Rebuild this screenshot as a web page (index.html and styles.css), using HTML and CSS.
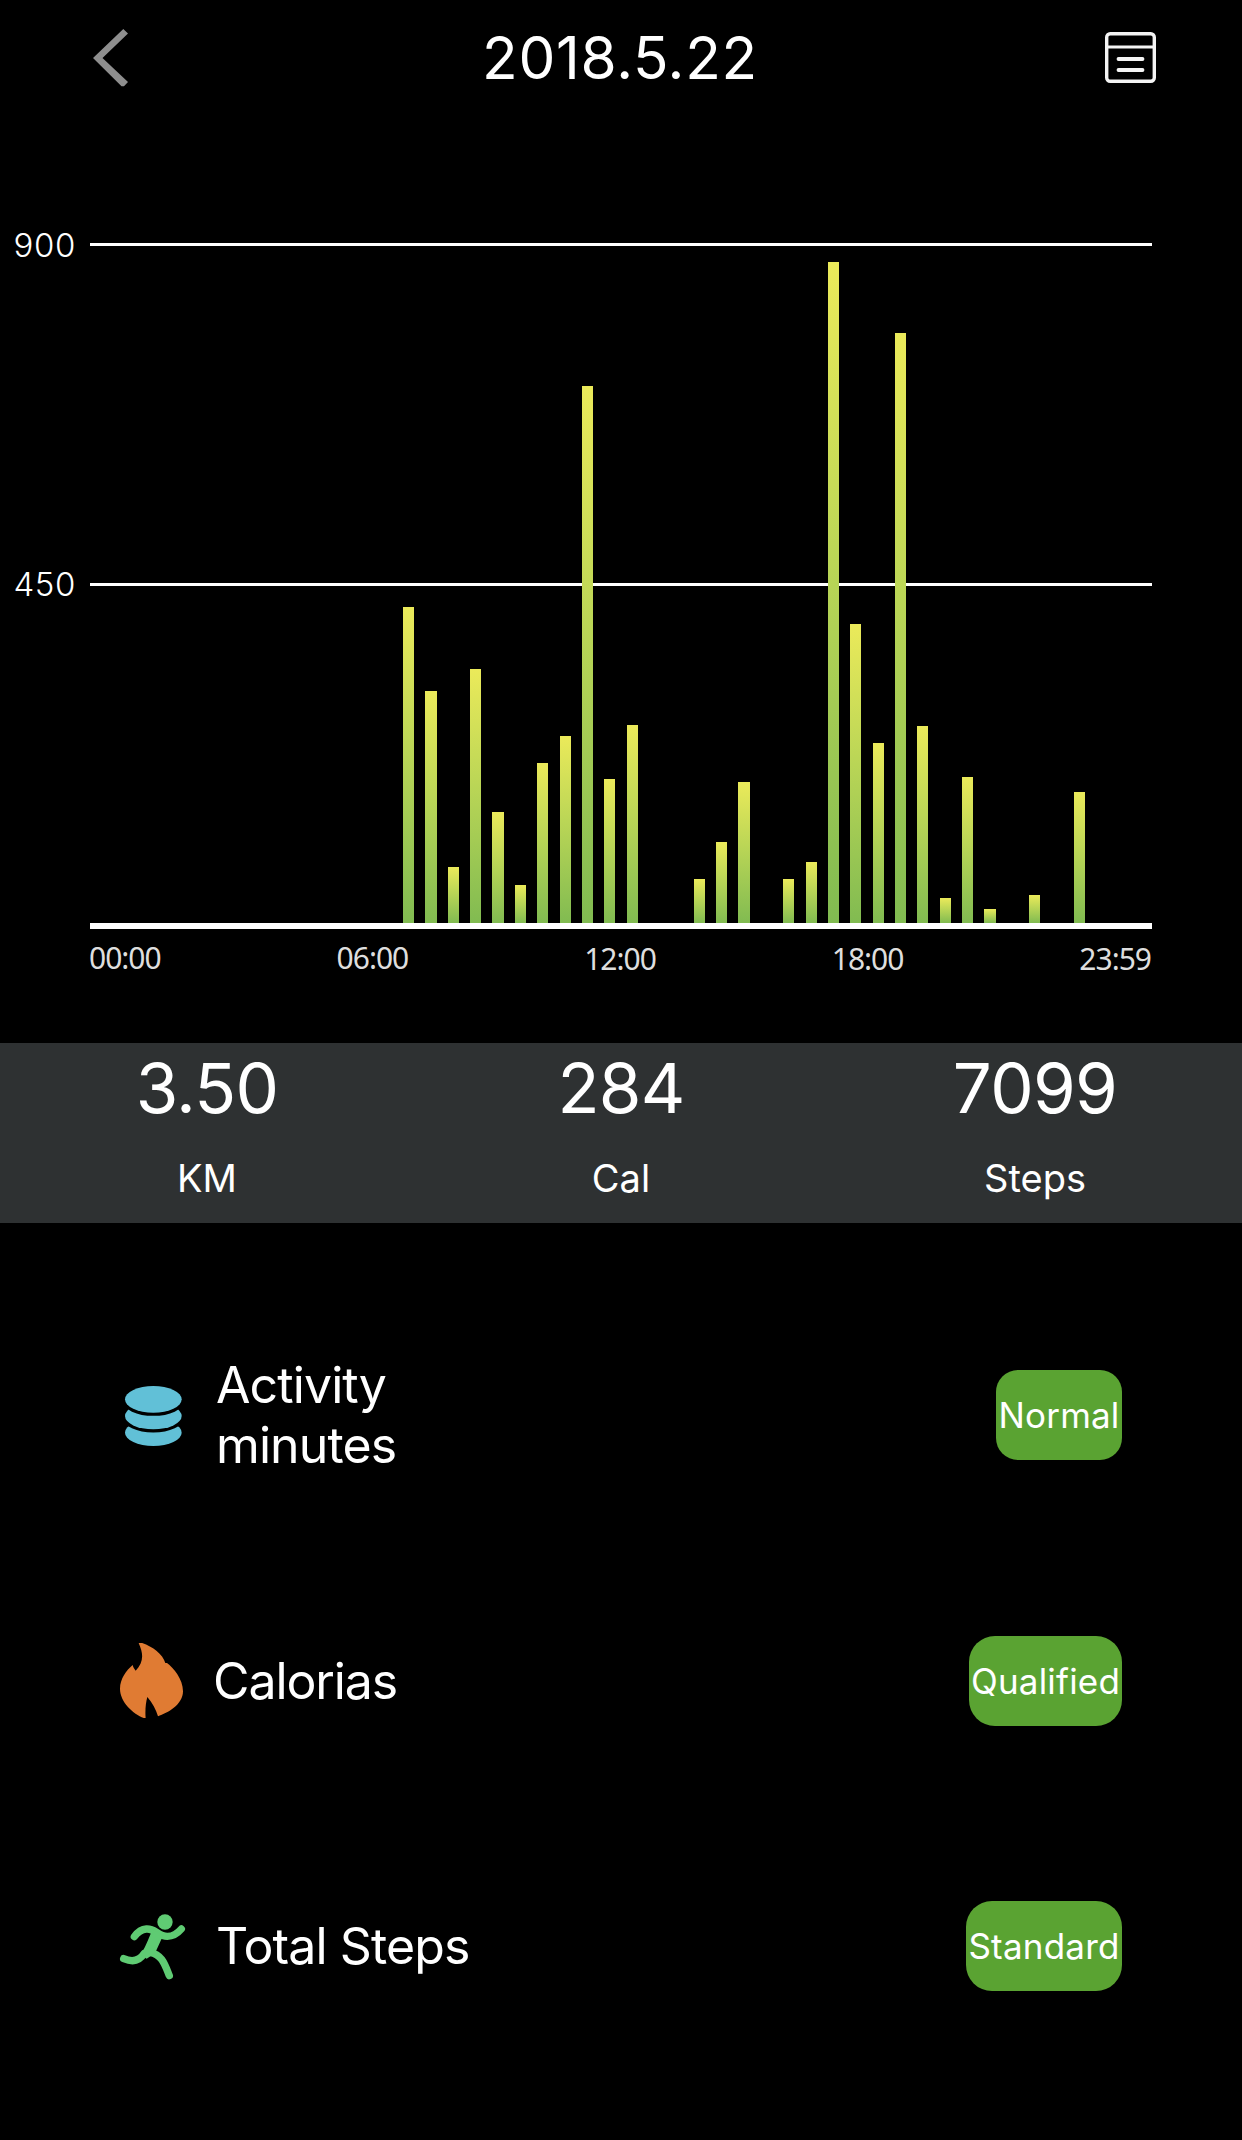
FILE: index.html
```html
<!DOCTYPE html>
<html lang="en">
<head>
  <meta charset="UTF-8" />
  <title>Daily Activity</title>
  <meta name="viewport" content="width=device-width, initial-scale=1.0" />
  <link rel="stylesheet" href="styles.css">
</head>
<body>
  <header class="header">
    <svg class="back" viewBox="0 0 35 58">
      <path d="M30.3 0 35 4.6 9.5 29 35 53 31 57.3H28.5L0 29Z" fill="#8e8e8e" />
    </svg>
    <h1>2018.5.22</h1>
    <svg class="list-icon" viewBox="0 0 51 51" fill="none" stroke="#f4f4f4" stroke-width="3.4">
      <rect x="1.7" y="1.7" width="47.6" height="47.6" rx="3.5" />
      <path d="M2 15h47" stroke-width="3" />
      <path d="M13.5 27h24M13.5 38h24" stroke-width="3.8" stroke-linecap="round" />
    </svg>
  </header>

  <section class="chart">
    <div class="y-axis">
      <span>900</span>
      <span>450</span>
    </div>
    <div class="plot">
      <div class="bars" id="bars"></div>
    </div>
    <div class="x-axis">
      <span>00:00</span>
      <span>06:00</span>
      <span class="low">12:00</span>
      <span class="low">18:00</span>
      <span class="low">23:59</span>
    </div>
  </section>

  <section class="stats">
    <div class="stat"><strong>3.50</strong><span>KM</span></div>
    <div class="stat"><strong>284</strong><span>Cal</span></div>
    <div class="stat"><strong>7099</strong><span>Steps</span></div>
  </section>

  <ul class="goals">
    <li>
      <svg class="icon" viewBox="45 83 225 225">
        <g fill="#61c0d7" stroke="#000" stroke-width="19" paint-order="stroke">
          <ellipse cx="160" cy="247" rx="85" ry="40" />
          <ellipse cx="160" cy="197" rx="85" ry="40" />
          <ellipse cx="160" cy="147" rx="85" ry="40" />
        </g>
      </svg>
      <span class="label minutes">Activity minutes</span>
      <span class="badge normal">Normal</span>
    </li>
    <li>
      <svg class="icon" viewBox="45 70 225 225">
        <path fill="#e07b33" d="M114 66C150 76 187 99 196 130L201 130C220 144 249 178 249 215C249 255 203 280 174 290C168 270 157 249 142 232C137 250 135 272 137 297C105 287 60 250 60 207C60 178 79 152 98 136C99 142 103 148 107 153C131 128 132 103 114 66Z" />
      </svg>
      <span class="label calories">Calorias</span>
      <span class="badge qualified">Qualified</span>
    </li>
    <li>
      <svg class="icon" viewBox="45 56 225 225">
        <g fill="none" stroke="#5fcb73" stroke-width="22" stroke-linecap="round" stroke-linejoin="round">
          <circle cx="195" cy="95" r="23" fill="#5fcb73" stroke="none" />
          <path d="M103 139C114 124 124 117 139 116C166 114 175 138 202 138C220 138 233 129 244 116" />
          <path d="M71 205C100 217 119 211 132 190" />
          <path d="M150 186C186 193 194 221 208 256" />
          <path d="M152 116 191 132 165 189 140 205 121 193Q132 180 152 130Z" fill="#5fcb73" stroke="none" />
        </g>
      </svg>
      <span class="label">Total Steps</span>
      <span class="badge standard">Standard</span>
    </li>
  </ul>

  <script>
    // one entry per half hour
    const steps = [
      0, 0, 0, 0, 0, 0, 0, 0, 0, 0, 0, 0,
      0, 0, 418, 307, 74, 336, 147, 50, 212, 247, 711, 191,
      262, 0, 0, 58, 107, 187, 0, 58, 81, 875, 396, 238,
      781, 261, 33, 193, 18, 0, 37, 0, 173, 0, 0, 0
    ];
    const max = 900;

    document.getElementById("bars").innerHTML = steps
      .map((n) => `<div class="bar" style="height: ${(n / max) * 100}%"></div>`)
      .join("");
  </script>
</body>
</html>
```
FILE: styles.css
```css
* {
  box-sizing: border-box;
}

body {
  font-family: Inter, 'Liberation Sans', sans-serif;
  background: #000;
  color: #fff;
  margin: 0;
  min-height: 2140px;
}

.header {
  display: flex;
  justify-content: space-between;
  align-items: center;
  height: 115px;
  padding: 0 86px 0 93px;
}

.back {
  width: 35px;
  height: 58px;
}

h1 {
  margin: 0 0 0 7px;
  font-size: 58.5px;
  font-weight: 400;
  letter-spacing: 0.7px;
}

.list-icon {
  width: 51px;
  height: 51px;
}

.chart {
  display: grid;
  grid-template-columns: 90px 1062px;
  grid-template-rows: 686px auto;
  padding-top: 128px;
  height: 928px;
}

.y-axis {
  display: flex;
  flex-direction: column;
  align-items: flex-end;
  gap: 299px;
  padding-right: 14px;
  margin-top: -18px;
  font-size: 33px;
  font-weight: 300;
  line-height: 40px;
  letter-spacing: 0.6px;
}

.plot {
  border-top: 3px solid #fff;
  border-bottom: 6px solid #fff;
  background: linear-gradient(#fff, #fff) 0 337px / 100% 3px no-repeat;
}

.bars {
  display: flex;
  align-items: flex-end;
  gap: calc(100% / 95);
  height: 680px;
  margin-top: -3px;
}

.bar {
  flex: 1;
  background: linear-gradient(#ebea5a, #bbd656 45%, #81bb51);
}

.x-axis {
  grid-column: 2;
  display: flex;
  justify-content: space-between;
  align-items: flex-start;
  padding-top: 9px;
  margin: 0 1px 0 -1px;
  color: #dedede;
  font-family: 'Noto Sans', sans-serif;
  font-size: 30px;
  line-height: 40px;
  letter-spacing: -1px;
}

.low {
  padding-top: 1px;
}

.stats {
  display: flex;
  height: 180px;
  background: #2e3132;
}

.stat {
  flex: 1;
  display: flex;
  flex-direction: column;
  align-items: center;
}

.stat strong {
  font-size: 69px;
  font-weight: 400;
  line-height: 91px;
  letter-spacing: -0.7px;
}

.stat span {
  font-size: 38px;
  line-height: 89px;
}

.goals {
  list-style: none;
  margin: 0;
  padding: 59.4px 120px 0 115px;
}

.goals li {
  display: flex;
  align-items: center;
  height: 265.5px;
}

.icon {
  width: 75px;
  height: 75px;
}

.label {
  width: 280px;
  margin-left: 26px;
  font-size: 50px;
  line-height: 60px;
  letter-spacing: -0.9px;
}

.minutes {
  width: 220px;
}

.calories {
  margin-left: 23px;
  letter-spacing: -1.1px;
}

.badge {
  height: 90px;
  margin-left: auto;
  border-radius: 26px;
  background: #5aa332;
  font-size: 35px;
  line-height: 90px;
  letter-spacing: 0.2px;
  text-align: center;
}

.normal {
  width: 126px;
  border-radius: 22px;
}

.qualified {
  width: 153px;
}

.standard {
  width: 156px;
}
```
